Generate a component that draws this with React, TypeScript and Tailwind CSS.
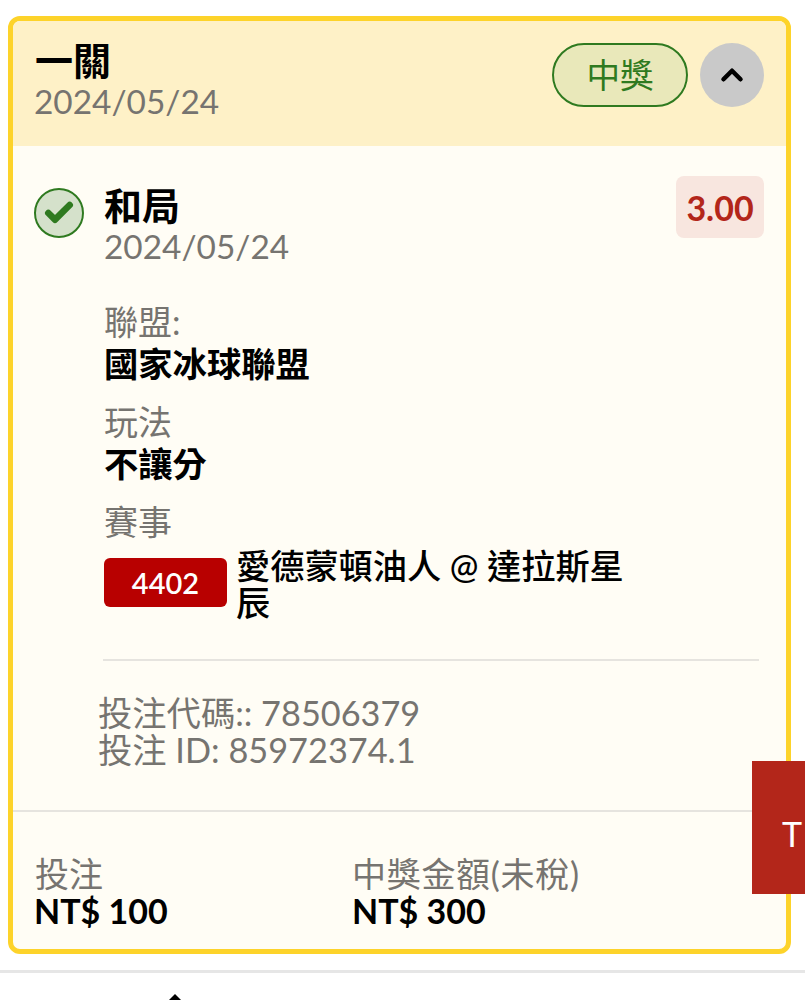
import { Check, ChevronUp } from 'lucide-react'

const font = "font-['Lato','Noto_Sans_CJK_TC',sans-serif]"

function Field({ label, value }: { label: string; value: string }) {
  return (
    <div className="mb-[17px]">
      <div className="text-[34px] leading-[41px] text-[#767470]">{label}</div>
      <div className="mt-px text-[34.3px] leading-[41px] font-bold text-black">{value}</div>
    </div>
  )
}

export default function App() {
  return (
    <div className={`${font} relative h-[1000px] overflow-hidden bg-white`}>
      <div className="pt-4 pl-2 pr-[14px]">
        <div className="h-[938px] rounded-xl border-[5px] border-[#fdd32a] bg-[#fffdf5] overflow-hidden flex flex-col">
          <div className="h-[125px] shrink-0 bg-[#fef1c7] px-[22px] pt-[19px] flex justify-between items-start">
            <div>
              <div className="text-[38px] leading-[41px] font-bold text-black">一關</div>
              <div className="-ml-px text-[33.4px] leading-[41px] text-[#767470]">2024/05/24</div>
            </div>
            <div className="flex items-center gap-3 mt-[3px]">
              <div className="w-[136px] h-16 rounded-full border-[2.5px] border-[#2f7a20] bg-[#e9e8ba] flex items-center justify-center text-[33.6px] text-[#2f7a20]">中獎</div>
              <div className="w-16 h-16 rounded-full bg-[#c9c9c9] flex items-center justify-center">
                <ChevronUp size={34} strokeWidth={3.2} className="text-black" />
              </div>
            </div>
          </div>

          <div className="flex-1 flex flex-col">
            <div className="pl-[21px] pr-[22px] pt-[30px]">
              <div className="flex justify-between items-start">
                <div className="flex gap-5">
                  <div className="mt-[12px] w-[50px] h-[50px] rounded-full border-[2.5px] border-[#2f7a20] bg-[#d5e1cb] flex items-center justify-center">
                    <Check size={32} strokeWidth={5} className="text-[#2f7a20]" />
                  </div>
                  <div className="mt-[9px]">
                    <div className="text-[38px] leading-[41px] font-bold text-black">和局</div>
                    <div className="text-[33.4px] leading-[41px] text-[#767470]">2024/05/24</div>
                  </div>
                </div>
                <div className="w-[88px] h-[62px] rounded-lg bg-[#f8e6df] flex items-center justify-center text-[34px] font-bold text-[#b3261a]">3.00</div>
              </div>

              <div className="pl-[70px] mt-[34px]">
                <Field label="聯盟:" value="國家冰球聯盟" />
                <Field label="玩法" value="不讓分" />
                <div className="text-[34px] leading-[41px] text-[#767470]">賽事</div>
                <div className="flex items-start gap-[9px] mt-[5px]">
                  <div className="mt-[11px] w-[123px] h-[49px] shrink-0 rounded-md bg-[#b80000] flex items-center justify-center text-[29px] font-semibold text-white">4402</div>
                  <div className="w-[400px] text-[34.2px] leading-[37px] font-medium text-black">愛德蒙頓油人 @ 達拉斯星辰</div>
                </div>
                <div className="mt-[38px] -ml-px mr-[5px] h-[2px] bg-[#e6e4df]" />
              </div>

              <div className="pl-[64px] mt-[33px] text-[34.3px] leading-[37px] text-[#767470]">
                <div>投注代碼:: 78506379</div>
                <div>投注 ID: 85972374.1</div>
              </div>
            </div>

            <div className="mt-[42px] h-[2px] bg-[#e6e4df]" />

            <div className="pl-[21px] pt-[43px] flex">
              <div className="w-[318px]">
                <div className="ml-px text-[34px] leading-[37px] text-[#767470]">投注</div>
                <div className="text-[34px] leading-[37px] font-bold text-black">NT$ 100</div>
              </div>
              <div>
                <div className="text-[34px] leading-[37px] tracking-[0.7px] text-[#767470]">中獎金額(未稅)</div>
                <div className="text-[34px] leading-[37px] font-bold text-black">NT$ 300</div>
              </div>
            </div>
          </div>
        </div>
      </div>

      <div className="absolute left-[752px] top-[761px] w-[53px] h-[133px] bg-[#b3261a] overflow-hidden pl-[30px] pt-[50px] text-[34px] leading-[46px] text-white">T</div>

      <div className="absolute left-0 right-0 top-[970px] h-[3px] bg-[#e6e6e6]" />
      <svg className="absolute left-[165px] top-[993px]" width="20" height="7" viewBox="0 0 20 7">
        <path d="M10 1 L16 7 L4 7 Z" fill="#000" />
      </svg>
    </div>
  )
}
